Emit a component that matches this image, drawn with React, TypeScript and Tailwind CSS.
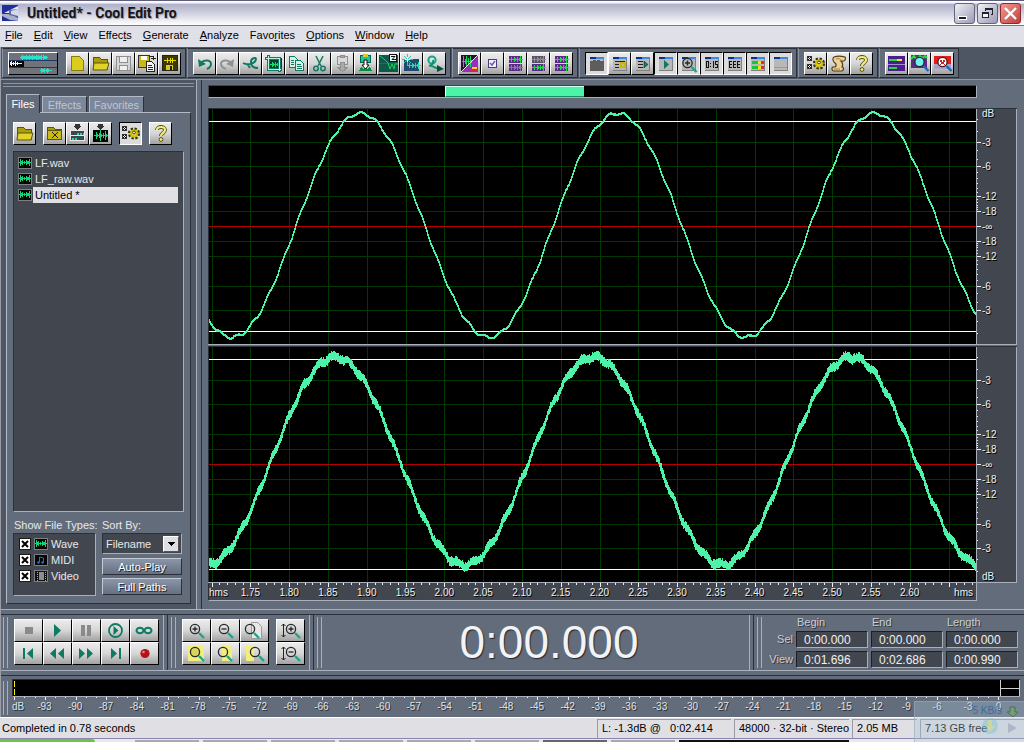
import type { ReactNode } from 'react'

const TEAL = '#0f7a62'

const menus = [
  ['', 'F', 'ile'],
  ['', 'E', 'dit'],
  ['', 'V', 'iew'],
  ['Effec', 't', 's'],
  ['', 'G', 'enerate'],
  ['', 'A', 'nalyze'],
  ['Favo', 'r', 'ites'],
  ['', 'O', 'ptions'],
  ['', 'W', 'indow'],
  ['', 'H', 'elp'],
]

/* ---------- icons ---------- */

function Ico({ children }: { children: ReactNode }) {
  return (
    <svg viewBox="0 0 21 21" className="w-[21px] h-[21px] shrink-0" fill="none" shapeRendering="crispEdges">
      {children}
    </svg>
  )
}

// small waveform made of vertical bars around a centre line
function Bars({ x, y, h, c }: { x: number; y: number; h: number[]; c: string }) {
  const d = h.map((v, i) => `M${x + i + 0.5} ${y - v}v${v * 2 + 1}`).join('')
  return <path d={d} stroke={c} />
}

const W14 = [0, 0, 3, 1, 0, 2, 5, 1, 0, 2, 0, 4, 1, 0]
const FLAT = [0, 0, 2, 0, 0, 2, 1, 0, 2, 0, 1, 3, 0, 0]

const Lens = ({ x, y, c = '#1ba58a', fill = 'none', sign = '' }: { x: number; y: number; c?: string; fill?: string; sign?: string }) => (
  <g shapeRendering="auto">
    <path d={`M${x + 4} ${y + 4}l5 5`} stroke={c} strokeWidth="2.4" />
    <circle cx={x} cy={y} r="4.6" stroke="#26282c" strokeWidth="1.3" fill={fill} />
    {sign && <path d={`M${x - 2.5} ${y}h5${sign === '+' ? `M${x} ${y - 2.5}v5` : ''}`} stroke="#26282c" strokeWidth="1.3" />}
  </g>
)

const Gear = ({ x, y }: { x: number; y: number }) => (
  <g shapeRendering="auto">
    <circle cx={x} cy={y} r="4.6" stroke="#3a3600" strokeWidth="3" strokeDasharray="2.2 1.4" />
    <circle cx={x} cy={y} r="3" fill="#f3e64a" stroke="#d2c100" strokeWidth="2" />
    <circle cx={x} cy={y - 1} r="1.4" fill="#fff" stroke="#3a3600" />
  </g>
)

const Folder = ({ mark }: { mark?: boolean }) => (
  <g>
    <path d="M3.500 16.500v-12h6l2 2h6v10z" fill="#a79c12" stroke="#5d5600" />
    {mark ? (
      <>
        <path d="M3.500 7.500h14v9h-14z" fill="#c9bb16" stroke="#5d5600" />
        <path d="M8 9l6 6M14 9l-6 6" stroke="#222" />
      </>
    ) : (
      <path d="M3 17l1-7h15l-2 7z" fill="#e2d32a" stroke="#5d5600" shapeRendering="auto" />
    )}
  </g>
)

const Pane = ({ children }: { children?: ReactNode }) => (
  <g>
    <path d="M4 4h14v14H4z" fill="#b8b8b8" />
    <path d="M4 17h14v1H4zM17 6h1v12h-1z" fill="#808080" />
    <path d="M4 4h14v2H4z" fill="#3b86e6" />
    <path d="M4 4h6v2H4z" fill="#0b2d90" />
    {children}
  </g>
)

const icons: Record<string, ReactNode> = {
  newFile: <path d="M4.500 3.500h8l4 4v10h-12z" fill="#dccb20" stroke="#8a7d00" />,
  open: <Folder />,
  close: <Folder mark />,
  saveOff: (
    <g stroke="#8d8f91">
      <path d="M3.500 3.500h14v14h-14z" fill="#d5d5d5" />
      <path d="M6.500 3.500h8v6h-8zM6.500 12.500h8v5h-8z" fill="#efefef" />
    </g>
  ),
  saveAs: (
    <g>
      <path d="M2.500 2.500h11v12h-11z" fill="#c9b81a" stroke="#333" />
      <path d="M5 3h6v4H5z" fill="#fff" />
      <path d="M10.500 8.500h5l3 3v7h-8z" fill="#f5f5f5" stroke="#222" />
      <path d="M12 12.500h4M12 14.500h5M12 16.500h5M14 3.500h3.500v3M15 5.500h5" stroke="#222" />
    </g>
  ),
  saveAll: (
    <g>
      <path d="M3.500 2.500h15v15h-15z" fill="#3c3a00" stroke="#222" />
      <Bars x={5} y={7} h={[0, 0, 0, 2, 0, 0, 2, 0, 2, 0, 0, 0]} c="#e6d800" />
      <path d="M7 12h7v5H7z" fill="#d8c81c" />
      <path d="M11 13h2v4h-2z" fill="#222" />
    </g>
  ),
  undo: (
    <g shapeRendering="auto">
      <path d="M7 10c3-4 10-3 10 1 0 3-2 4-4 5" stroke={TEAL} strokeWidth="2" />
      <path d="M4 6l1 8 7-3z" fill={TEAL} />
    </g>
  ),
  redo: (
    <g shapeRendering="auto">
      <path d="M14 10c-3-4-10-3-10 1 0 3 2 4 5 5" stroke="#8f9294" strokeWidth="2" />
      <path d="M17 6l-1 8-7-3z" fill="#8f9294" />
    </g>
  ),
  repeat: (
    <g shapeRendering="auto">
      <path d="M3 10c5 3 13 0 13-4 0-2-5-1-5 3 0 4 3 6 7 6M8 12l2 3" stroke={TEAL} strokeWidth="2" />
    </g>
  ),
  trim: (
    <g>
      <path d="M4 5h15v11H4z" fill="#0a3a34" />
      <Bars x={4} y={11} h={FLAT} c="#12e05e" />
      <path d="M2 5.500h14.500V19M5.500 2v14.500H19" stroke={TEAL} strokeWidth="3" />
      <path d="M3 5.500h13.500V18M5.500 3v13.500H18" stroke="#bff0e0" />
    </g>
  ),
  copy: (
    <g stroke={TEAL} fill="#d7efe8">
      <path d="M3.500 3.500h5l3 3v8h-8z" />
      <path d="M9.500 7.500h5l3 3v7h-8z" />
      <path d="M5 7.500h3M5 9.500h3M5 11.500h3M11 11.500h4M11 13.500h5M11 15.500h5" />
    </g>
  ),
  cut: (
    <g shapeRendering="auto" stroke={TEAL} strokeWidth="1.500">
      <path d="M7 3l5 10M14 3L9 13" />
      <circle cx="7" cy="15.500" r="2.200" />
      <circle cx="14" cy="15.500" r="2.200" />
    </g>
  ),
  pasteOff: (
    <g stroke="#8d8f91" fill="#d9d9d9">
      <path d="M5.500 3.500h10v8h-10z" />
      <path d="M8.500 2.500h4v2h-4z" fill="#aaa" />
      <path d="M8.500 9.500h4v5h3l-5 4-5-4h3z" fill="#aaa" />
    </g>
  ),
  mixPaste: (
    <g>
      <path d="M5.500 2.500h10v7h-10z" fill="#18c4a0" stroke="#0b5f4c" />
      <path d="M8 1h5v3H8z" fill="#e2c81e" />
      <path d="M4 18l2-4 3 2 1-2 2 2 3-2 2 4z" fill="#0c8a3c" />
      <path d="M9 7h3v5h2l-3.500 4L7 12h2z" fill="#fff" stroke="#111" shapeRendering="auto" />
    </g>
  ),
  zero: (
    <g>
      <path d="M1 2h19v17H1z" fill="#0d5a4a" />
      <path d="M1 10.500h19" stroke="#d02020" />
      <path d="M2 3l4 3 4 4 2 6 2-5 2 5 1-5h3" stroke="#17d15c" shapeRendering="auto" />
      <path d="M11.500 1.500h7v7h-7z" fill="#e7fff8" stroke="#111" />
      <path d="M13 3.500h4l-3 3h4" stroke="#111" shapeRendering="auto" />
    </g>
  ),
  spark: (
    <g>
      <path d="M3 6h15v12H3z" fill="#1d4a6e" />
      <Bars x={6} y={12} h={FLAT} c="#1de0a0" />
      <path d="M6.500 1v11M1 6.500h11M3 3l7 7M10 3l-7 7" stroke="#30c7a8" />
      <path d="M6.500 4v5M4 6.500h5" stroke="#fff" />
    </g>
  ),
  convert: (
    <g shapeRendering="auto">
      <circle cx="8" cy="7" r="3.600" stroke="#12a888" strokeWidth="2" />
      <path d="M9 7c1 3-1 5-4 6 3-1 6 2 10 3" stroke="#0e8f73" strokeWidth="2" />
      <path d="M13 12l7 4-7 3z" fill="#0b4f40" />
    </g>
  ),
  spectral: (
    <g>
      <path d="M2 2h17v17H2z" fill="#2d0b3a" />
      <path d="M2 19L19 2v17z" fill="#9a2cc0" shapeRendering="auto" />
      <Bars x={3} y={8} h={[0, 5, 0, 2, 5, 0, 3, 0, 5, 1]} c="#19d45d" />
      <path d="M2 19L19 2" stroke="#e8e8e8" shapeRendering="auto" />
      <path d="M13 15h5" stroke="#ffd21e" strokeWidth="2" />
      <path d="M11 18h7" stroke="#e01e5a" strokeWidth="2" />
    </g>
  ),
  check: (
    <g>
      <path d="M6.500 6.500h8v8h-8z" fill="#f2f2fa" stroke="#4b3b78" />
      <path d="M8 10l2 2 3-4" stroke="#7c54b8" strokeWidth="1.500" shapeRendering="auto" />
    </g>
  ),
  bothCh: (
    <g>
      <path d="M4 3h13v7H4zM4 11h13v7H4z" fill="#5b2a86" />
      <Bars x={4} y={6} h={FLAT} c="#17e03f" />
      <Bars x={4} y={14} h={FLAT} c="#8a7a99" />
    </g>
  ),
  rightCh: (
    <g>
      <path d="M4 3h13v7H4z" fill="#5b5068" />
      <Bars x={4} y={6} h={FLAT} c="#8f8f8f" />
      <path d="M4 11h13v7H4z" fill="#5b2a86" />
      <Bars x={4} y={14} h={FLAT} c="#17e03f" />
    </g>
  ),
  stereoCh: (
    <g>
      <path d="M4 3h13v7H4zM4 11h13v7H4z" fill="#5b2a86" />
      <Bars x={4} y={6} h={FLAT} c="#17e03f" />
      <Bars x={4} y={14} h={FLAT} c="#17e03f" />
    </g>
  ),
  winTabs: (
    <Pane>
      <path d="M4 8h3v-1h3v1h1V7h3v1h4v10H4z" fill="#5d5d5d" />
    </Pane>
  ),
  winCue: (
    <Pane>
      <path d="M6 8.500h10M6 11.500h4M6 14.500h4" stroke="#222" />
      <path d="M12 10h4v4h-4zM14 14h3" stroke="#c8ba00" strokeWidth="2" />
    </Pane>
  ),
  winList: (
    <Pane>
      <path d="M6 8.500h5M6 11.500h5M6 14.500h5" stroke="#222" />
      <path d="M12 8l4 3.500-4 3.500z" fill={TEAL} stroke="#222" strokeWidth=".5" shapeRendering="auto" />
    </Pane>
  ),
  winPlay: (
    <Pane>
      <path d="M9 7l5 4.500L9 16z" fill={TEAL} shapeRendering="auto" />
    </Pane>
  ),
  winZoom: (
    <Pane>
      <Lens x={9.5} y={10} sign="+" />
    </Pane>
  ),
  winTime: (
    <Pane>
      <path
        d="M5.500 8.500h2v6h-2zM9.500 10v1M9.500 13v1M12.500 8v7M17 8.500h-2.500v3h2v3h-2.500"
        stroke="#111"
      />
    </Pane>
  ),
  winSel: (
    <Pane>
      <path d="M5 8.500h12M5 11.500h12M5 14.500h12" stroke="#111" strokeDasharray="3 1" />
      <path d="M5.500 8v7M9.500 8v7M13.500 8v7" stroke="#111" />
    </Pane>
  ),
  winMeter: (
    <Pane>
      <path d="M5 8h6v3H5zM5 13h6v3H5z" fill="#17c53a" />
      <path d="M11 8h3v3h-3zM11 13h3v3h-3z" fill="#f2e21a" />
      <path d="M14 8h3v3h-3zM14 13h3v3h-3z" fill="#e0301e" />
    </Pane>
  ),
  winBlank: (
    <Pane>
      <path d="M4 14.500h13" stroke="#9a9a9a" />
    </Pane>
  ),
  settings: (
    <g>
      <path d="M2.500 3.500h4v4h-4zM2.500 11.500h4v4h-4z" fill="#eee" stroke="#333" />
      <path d="M3 4l3 3M6 4l-3 3M3 12l3 3M6 12l-3 3" stroke="#111" />
      <Gear x={14} y={10.5} />
    </g>
  ),
  script: (
    <g shapeRendering="auto">
      <path d="M6 4c3-1 7-1 11 0 1 1 0 4-1 4h-3c2 2 2 4 1 6 2 0 2 3 0 4H6c-2 0-3-3-1-4h2c2-1 1-3 0-4-2-1-3-5-1-6z" fill="#ecd29a" stroke="#4f3a14" strokeWidth="1.200" />
      <path d="M8 6c3-1 5 0 5 2M6 16h6" stroke="#a5803a" />
    </g>
  ),
  help: (
    <g shapeRendering="auto">
      <path d="M7 7c0-4 8-4 8 0 0 3-4 3-4 6" stroke="#4e4c10" strokeWidth="3.800" />
      <circle cx="11" cy="16.500" r="1.900" fill="#f4ee7a" stroke="#4e4c10" />
      <path d="M7 7c0-4 8-4 8 0 0 3-4 3-4 6" stroke="#f4ee7a" strokeWidth="2.200" />
    </g>
  ),
  levels: (
    <g>
      <path d="M2 3h17v15H2z" fill="#4a1f8a" />
      <path d="M3 7h11" stroke="#19e03c" strokeWidth="2" />
      <path d="M11 7h5" stroke="#f4e51d" strokeWidth="2" />
      <path d="M3 15h8" stroke="#19e03c" strokeWidth="2" />
      <path d="M2 11h17" stroke="#a78bd0" />
    </g>
  ),
  freq: (
    <g>
      <path d="M2 2h16v13H2z" fill="#5b2a86" />
      <path d="M2 6l3-3 3 4 3-4 3 2 2-2 2 2" stroke="#19e03c" strokeWidth="2" shapeRendering="auto" />
      <Lens x={10.5} y={9} c="#1e64c8" fill="#6ff3f0" />
    </g>
  ),
  phase: (
    <g>
      <path d="M2 3h17v8H2z" fill="#e01e1e" />
      <path d="M2 11h17v5H2z" fill="#a9a2c4" />
      <Lens x={10.5} y={9} c="#1e64c8" fill="#ffffff" />
      <path d="M8 7h2v2H8zM11 7h2v2h-2zM9 9h3v2H9zM8 11h1v1H8zM12 11h1v1h-1z" fill="#e02020" />
    </g>
  ),
  insertMulti: (
    <g>
      <path d="M8 1h5v2h2l-4.500 4L6 3h2z" fill="#333" />
      <path d="M3.500 7.500h14v5h-14zM3.500 12.500h14v5h-14z" fill="#3f464f" stroke="#e8e8e8" />
      <path d="M10 10.500h7M5 15.500h6" stroke="#22dca0" strokeWidth="2" strokeDasharray="2 1" />
    </g>
  ),
  insertWave: (
    <g>
      <path d="M8 1h5v2h2l-4.500 4L6 3h2z" fill="#333" />
      <path d="M3 7h15v12H3z" fill="#050505" />
      <Bars x={4} y={12} h={W14} c="#14d47c" />
    </g>
  ),
}

/* ---------- buttons ---------- */

function ToolButton({ icon, label, down }: { icon: string; label: string; down?: boolean }) {
  return (
    <button
      type="button"
      aria-label={label}
      aria-pressed={down}
      className={
        down
          ? 'flex size-[23px] items-center justify-center border border-t-black border-l-black border-r-white border-b-white bg-[#dcdcdc]'
          : 'flex size-[23px] items-center justify-center border border-t-white border-l-white border-r-black border-b-black bg-linear-to-b from-[#ececec] via-[#d6d6d6] to-[#a2a2a2]'
      }
    >
      <Ico>{icons[icon]}</Ico>
    </button>
  )
}

function ToolGroup({ children }: { children: ReactNode }) {
  return (
    <div className="flex h-[30px] items-center border border-t-[#2b2f38] border-l-[#8c95a3] border-r-[#2b2f38] border-b-[#2b2f38] bg-[#636c7a] pr-1 pl-[5px]">
      {children}
    </div>
  )
}

const groups: [string, string, boolean?][][] = [
  [
    ['undo', 'Undo'], ['redo', 'Redo'], ['repeat', 'Repeat last command'], ['trim', 'Trim'], ['copy', 'Copy'],
    ['cut', 'Cut'], ['pasteOff', 'Paste'], ['mixPaste', 'Mix paste'], ['zero', 'Zero crossings'],
    ['spark', 'Noise reduction'], ['convert', 'Convert sample type'],
  ],
  [['spectral', 'Spectral view'], ['check', 'Snap'], ['bothCh', 'Left channel'], ['rightCh', 'Right channel'], ['stereoCh', 'Both channels']],
  [
    ['winTabs', 'Organizer', true], ['winCue', 'Cue list'], ['winList', 'Play list'], ['winPlay', 'Transport', true],
    ['winZoom', 'Zoom', true], ['winTime', 'Time', true], ['winSel', 'Selection', true], ['winMeter', 'Levels', true],
    ['winBlank', 'Status bar', true],
  ],
  [['settings', 'Settings'], ['script', 'Scripts'], ['help', 'Help']],
  [['levels', 'Monitor levels'], ['freq', 'Frequency analysis'], ['phase', 'Phase analysis']],
]

function Toolbar() {
  return (
    <div className="flex gap-px border-b border-[#8c95a3] bg-[#4f5663] py-px pl-px">
      <ToolGroup>
        <button
          type="button"
          aria-label="Switch to multitrack view"
          className="mr-2 h-[23px] w-[50px] border border-t-white border-l-white border-r-black border-b-black bg-[#59616b]"
        >
          <svg viewBox="0 0 48 21" className="block h-[21px] w-[48px]" shapeRendering="crispEdges">
            <path d="M0 0h48v21H0z" fill="#70747a" />
            <path d="M0 7h48v1H0zM0 14h48v1H0z" fill="#1c3a67" />
            <path d="M0 8h15v6H0z" fill="#050505" />
            <path d="M12 4.500h26" stroke="#2be0c8" strokeWidth="3" strokeDasharray="6 1 3 1" />
            <Bars x={11} y={4} h={[0, 1, 2, 0, 0, 1, 2, 1, 0, 2, 0, 1, 2, 0, 1, 0, 2, 0, 2, 1, 0, 2, 0, 2, 1, 0, 1, 0]} c="#2be0c8" />
            <Bars x={1} y={10} h={[1, 2, 0, 1, 0, 2, 0, 1, 0, 0, 0, 0]} c="#f2f2f2" />
            <Bars x={31} y={17} h={[0, 2, 1, 1, 2, 0, 1, 2, 1, 0, 0, 0]} c="#2be0c8" />
          </svg>
        </button>
        <ToolButton icon="newFile" label="New" />
        <ToolButton icon="open" label="Open" />
        <ToolButton icon="saveOff" label="Save" />
        <ToolButton icon="saveAs" label="Save as" />
        <ToolButton icon="saveAll" label="Save all" />
      </ToolGroup>
      {groups.map((group, i) => (
        <ToolGroup key={i}>
          {group.map(([icon, label, down]) => (
            <ToolButton key={icon} icon={icon} label={label} down={down} />
          ))}
        </ToolGroup>
      ))}
    </div>
  )
}

/* ---------- title and menu ---------- */

function TitleBar() {
  return (
    <header className="flex h-[26px] items-center border-t border-b border-t-[#5c5c7c] border-b-[#77778f] bg-linear-to-b from-[#ffffff] from-5% via-[#b0b0c9] via-15% to-[#ffffff] pr-[3px] pl-[2px]">
      <svg viewBox="0 0 16 16" className="size-4">
        <path d="M0 0h16v16H0z" fill="#1f2f9c" />
        <path d="M16 1L2 8h8l6-3z" fill="#e8e8f4" />
        <path d="M0 9h9l7 4v3L8 15 0 11z" fill="#a9afc8" />
        <path d="M7 5l9-1v8l-9-2z" fill="#5d6aa8" />
        <path d="M9 6l7-2v7l-7-2z" fill="#d5d8ea" />
      </svg>
      <h1 className="ml-[9px] flex-1 font-['Roboto',sans-serif] text-[14px] leading-5 font-bold text-[#151515] [text-shadow:1px_1px_1px_#9a9ab0]">
        Untitled* - Cool Edit Pro
      </h1>
      <div className="flex gap-[2px]">
        <button type="button" aria-label="Minimize" className="size-[21px] rounded-[3px] border border-[#63637e] bg-linear-to-br from-[#f2f2f8] to-[#9a9ab4]">
          <svg viewBox="0 0 19 19" className="block size-[19px]" shapeRendering="crispEdges">
            <path d="M3 12h9v4H3z" fill="#fff" />
            <path d="M4 13h7v2H4z" fill="#1d1d2c" />
          </svg>
        </button>
        <button type="button" aria-label="Restore" className="size-[21px] rounded-[3px] border border-[#63637e] bg-linear-to-br from-[#f2f2f8] to-[#9a9ab4]">
          <svg viewBox="0 0 19 19" className="block size-[19px]" shapeRendering="crispEdges" fill="none" stroke="#23232f">
            <path d="M7.500 7V4.500h7v6h-2M7 5.500h8" />
            <path d="M4.500 8.500h6v5h-6zM4 9.500h7" fill="#f4f4fa" />
          </svg>
        </button>
        <button type="button" aria-label="Close" className="size-[21px] rounded-[3px] border border-[#8a2b2b] bg-linear-to-br from-[#f29a94] to-[#c03c3c]">
          <svg viewBox="0 0 19 19" className="block size-[19px]">
            <path d="M4 4l11 11M15 4L4 15" stroke="#fff" strokeWidth="2.400" />
          </svg>
        </button>
      </div>
    </header>
  )
}

function MenuBar() {
  return (
    <nav className="flex h-[21px] items-center gap-[11px] bg-[#e0e0e9] pb-[3px] pl-[5px] text-[11px] leading-4 text-black">
      {menus.map(([pre, key, post]) => (
        <button type="button" key={pre + key + post}>
          {pre}
          <span className="underline">{key}</span>
          {post}
        </button>
      ))}
    </nav>
  )
}

/* ---------- organizer ---------- */

const files = ['LF.wav', 'LF_raw.wav', 'Untitled *']

function WaveBadge() {
  return (
    <svg viewBox="0 0 14 12" className="h-3 w-[14px] shrink-0" shapeRendering="crispEdges">
      <path d="M.5.500h13v11H.5z" fill="#040404" stroke="#7d8086" />
      <Bars x={1} y={5} h={[0, 3, 1, 2, 0, 1, 0, 2, 1, 1, 3, 0]} c="#12d474" />
    </svg>
  )
}

const types = [
  { name: 'Wave', badge: <WaveBadge /> },
  {
    name: 'MIDI',
    badge: (
      <svg viewBox="0 0 14 12" className="h-3 w-[14px]">
        <path d="M.5.500h13v11H.5z" fill="#040404" stroke="#7d8086" />
        <path d="M5.500 8V3l4 1v4" stroke="#1a6fd8" fill="none" />
        <circle cx="4.500" cy="8.500" r="1.300" fill="#1a6fd8" />
        <circle cx="8.500" cy="8.500" r="1.300" fill="#1a6fd8" />
      </svg>
    ),
  },
  {
    name: 'Video',
    badge: (
      <svg viewBox="0 0 14 12" className="h-3 w-[14px]" shapeRendering="crispEdges">
        <path d="M.5.500h13v11H.5z" fill="#111" stroke="#7d8086" />
        <path d="M5 2h5v8H5z" fill="#8d8d8d" />
        <path d="M3.500 2v9M11.500 2v9" stroke="#aaa" strokeDasharray="1 1" />
      </svg>
    ),
  },
]

const smallButton =
  'h-[17px] border border-t-[#c3cad6] border-l-[#c3cad6] border-r-[#2b2f38] border-b-[#2b2f38] bg-linear-to-b from-[#8b96a9] to-[#667081] text-[11px] leading-[14px] text-white [text-shadow:1px_1px_0_#222]'

function Organizer() {
  return (
    <aside className="flex w-[195px] shrink-0 flex-col bg-[#4f5663] px-[5px] pt-[3px] pb-[5px] text-[11px] leading-4 text-[#e6e8ec]">
      <div className="-mx-[3px] h-1 border-t border-b border-[#8c95a3]" />
      <div className="mt-[7px] flex items-end gap-[2px]">
        <button type="button" className="z-10 -mb-px h-[19px] w-[34px] border border-b-0 border-t-[#b4bac5] border-l-[#b4bac5] border-r-[#2b2f38] bg-[#636c7a] text-white">
          Files
        </button>
        <button type="button" className="h-[16px] w-[45px] border border-b-0 border-t-[#b4bac5] border-l-[#b4bac5] border-r-[#2b2f38] bg-[#7b879b] leading-[14px] text-[#c0c5ce]">
          Effects
        </button>
        <button type="button" className="h-[16px] w-[55px] border border-b-0 border-t-[#b4bac5] border-l-[#b4bac5] border-r-[#2b2f38] bg-[#7b879b] leading-[14px] text-[#c0c5ce]">
          Favorites
        </button>
      </div>
      <div className="flex flex-1 flex-col border border-t-[#b4bac5] border-l-[#b4bac5] border-r-[#2b2f38] border-b-[#2b2f38] bg-[#636c7a] px-[6px] pt-[9px] pb-[7px]">
        <div className="flex">
          <ToolButton icon="open" label="Import file" />
          <div className="mx-[7px] flex">
            <ToolButton icon="close" label="Close file" />
            <ToolButton icon="insertMulti" label="Insert into multitrack" />
            <ToolButton icon="insertWave" label="Edit file" />
          </div>
          <ToolButton icon="settings" label="Show options" down />
          <div className="ml-[7px]">
            <ToolButton icon="help" label="Help" />
          </div>
        </div>
        <ul className="mt-[6px] flex-1 border border-t-[#2b2f38] border-l-[#2b2f38] border-r-[#a9b0bb] border-b-[#a9b0bb] bg-[#42474f] py-[3px] pr-[5px] pl-[4px]">
          {files.map((file, i) => (
            <li key={file}>
              <button type="button" className="flex h-4 w-full items-center gap-px text-left">
                <WaveBadge />
                <span className={i === 2 ? 'flex-1 bg-[#e0dfe4] pl-[2px] text-black' : 'flex-1 pl-[2px]'}>{file}</span>
              </button>
            </li>
          ))}
        </ul>
        <div className="mt-[5px] flex gap-[6px]">
          <fieldset className="w-[83px] min-w-0 shrink-0">
            <legend className="pl-px whitespace-nowrap">Show File Types:</legend>
            <div className="flex h-[63px] flex-col border border-t-[#2b2f38] border-l-[#2b2f38] border-r-[#a9b0bb] border-b-[#a9b0bb] bg-[#42474f] pt-[2px] pl-[5px]">
              {types.map((type) => (
                <label key={type.name} className="flex h-4 items-center gap-[3px]">
                  <span className="grid size-3">
                    <input type="checkbox" defaultChecked className="col-start-1 row-start-1 size-3 appearance-none border border-[#1a1a1a] bg-white" />
                    <svg viewBox="0 0 12 12" className="pointer-events-none z-10 col-start-1 row-start-1 size-3">
                      <path d="M3 3l6 6M9 3l-6 6" stroke="#000" strokeWidth="2" />
                    </svg>
                  </span>
                  {type.badge}
                  {type.name}
                </label>
              ))}
            </div>
          </fieldset>
          <div className="flex w-[80px] flex-col">
            <label htmlFor="sort">Sort By:</label>
            <div className="grid border border-t-[#2b2f38] border-l-[#2b2f38] border-r-[#a9b0bb] border-b-[#a9b0bb] bg-[#42474f]">
              <select id="sort" className="col-start-1 row-start-1 h-[19px] w-full appearance-none pl-[3px] text-[11px] leading-4">
                <option>Filename</option>
              </select>
              <span className="pointer-events-none col-start-1 row-start-1 mr-[2px] flex h-4 w-4 items-center justify-center self-center justify-self-end border border-t-white border-l-white border-r-[#555] border-b-[#555] bg-[#dedee4]">
                <svg viewBox="0 0 7 4" className="h-1 w-[7px]" shapeRendering="crispEdges">
                  <path d="M0 0h7L3.500 4z" />
                </svg>
              </span>
            </div>
            <button type="button" className={smallButton + ' mt-[4px]'}>Auto-Play</button>
            <button type="button" className={smallButton + ' mt-[3px]'}>Full Paths</button>
          </div>
        </div>
      </div>
    </aside>
  )
}

/* ---------- waveform ---------- */

const PLOT_W = 767
const PLOT_H = 235
const PX_PER_SEC = 775.8
const gridX = Array.from({ length: 20 }, (_, i) => Math.floor((0.004 + i * 0.05) * PX_PER_SEC) + 0.5)
const gridY = [33, 57, 87, 102, 132, 147, 177, 201]

const noise = (n: number) => {
  const s = Math.sin(n * 127.1 + 11.7) * 43758.5453
  return s - Math.floor(s)
}

const wave = (x: number, mid: number, amp: number, peak: number, period: number, hum: number, humPeak: number) =>
  mid - amp * Math.cos(((x - peak) / period) * Math.PI * 2) - hum * Math.cos(((x - humPeak) / 15.5) * Math.PI * 2)

function leftPath() {
  let d = ''
  for (let x = 0; x < PLOT_W; x++) {
    const a = Math.round(wave(x, 116, 112, 151.5, 257, 1.5, 152) + noise(x) * 0.6)
    const b = Math.round(wave(x + 1, 116, 112, 151.5, 257, 1.5, 152) + noise(x + 1) * 0.6)
    d += `M${x + 0.5} ${Math.min(a, b) - 1}V${Math.max(a, b) + 1}`
  }
  return d
}

function rightPath() {
  let d = ''
  for (let x = 0; x < PLOT_W; x++) {
    const y = wave(x, 114, 104, 126, 258, 2, 124)
    d += `M${x + 0.5} ${Math.round(y - 3 - noise(x) * 2.5)}V${Math.round(y + 3 + noise(x + 900) * 2.5)}`
  }
  return d
}

function Plot({ d, name }: { d: string; name: string }) {
  return (
    <svg
      viewBox={`0 0 ${PLOT_W} ${PLOT_H}`}
      preserveAspectRatio="none"
      className="block h-[235px] w-full bg-black"
      shapeRendering="crispEdges"
      fill="none"
      role="img"
      aria-label={name}
    >
      <path d={gridX.map((x) => `M${x} 0V${PLOT_H}`).join('')} stroke="#003800" />
      <path d={gridY.map((y) => `M0 ${y + 0.5}H${PLOT_W}`).join('')} stroke="#003800" />
      <path d={`M0 117.500H${PLOT_W}`} stroke="#b40000" />
      <path d={`M0 12.500H${PLOT_W}M0 222.500H${PLOT_W}`} stroke="#fff" />
      <path d={d} stroke="#4df3a8" />
    </svg>
  )
}

const dbMarks: [string, number][] = [
  ['-3', 33], ['-6', 57], ['-12', 87], ['-18', 102], ['-∞', 117], ['-18', 132], ['-12', 147], ['-6', 177], ['-3', 201],
]
const dbMinor = [1, 2, 4, 5, 7, 8, 9, 10, 11, 13, 14, 15, 16, 17].flatMap((db) => {
  const off = Math.round(120 * Math.pow(10, -db / 20))
  return [117 - off, 117 + off]
})

function DbScale({ unitY }: { unitY: number }) {
  return (
    <svg viewBox="0 0 39 235" className="block h-[235px] w-[39px] font-['Liberation_Sans',sans-serif] text-[10px]" fill="#f0f0f0">
      <g shapeRendering="crispEdges" stroke="#f0f0f0">
        <path d={dbMarks.map(([, y]) => `M0 ${y + 0.5}h4`).join('')} />
        <path d={dbMinor.map((y) => `M0 ${y + 0.5}h1`).join('')} />
      </g>
      <g className="[text-shadow:1px_1px_0_#000]">
        <text x="5" y={unitY}>dB</text>
        {dbMarks.map(([label, y]) => (
          <text key={y} x="5" y={y + 4}>{label}</text>
        ))}
      </g>
    </svg>
  )
}

function Channel({ d, name, unitY }: { d: string; name: string; unitY: number }) {
  return (
    <div className="flex border-t border-b border-t-[#2b2f38] border-b-[#a9b0bb]">
      <div className="min-w-0 flex-1 border-l border-[#2b2f38]">
        <Plot d={d} name={name} />
      </div>
      <div className="w-[41px] border-r border-l border-[#a9b0bb] bg-[#42474f]">
        <DbScale unitY={unitY} />
      </div>
    </div>
  )
}

const times = Array.from({ length: 18 }, (_, i) => (1.75 + i * 0.05).toFixed(2))

function TimeRuler() {
  const ticks = Array.from({ length: 100 }, (_, i) => {
    const x = Math.floor((0.004 + i * 0.01) * PX_PER_SEC) + 0.5
    return `M${x} 0v${i % 5 ? 2 : 4}`
  }).join('')
  return (
    <div className="mr-10 flex h-[18px] flex-col border-r border-b border-l border-l-[#2b2f38] border-r-[#a9b0bb] border-b-[#a9b0bb] bg-[#42474f] text-[#f0f0f0]">
      <svg viewBox={`0 0 ${PLOT_W} 4`} preserveAspectRatio="none" className="h-1 w-full" shapeRendering="crispEdges">
        <path d={ticks} stroke="#f0f0f0" />
      </svg>
      <div className="flex text-[10px] leading-[11px] [text-shadow:1px_1px_0_#000]">
        <span className="w-[22px]">hms</span>
        <div className="flex flex-1">
          {times.map((t) => (
            <span key={t} className="flex-1 text-center">{t}</span>
          ))}
        </div>
        <span className="w-[47px] pr-[3px] text-right">hms</span>
      </div>
    </div>
  )
}

function Editor() {
  return (
    <main className="flex min-w-0 flex-1 flex-col bg-[#636c7a] pt-[5px] pr-[7px] pb-2 pl-[6px]">
      <div className="mr-10 mb-[10px] flex h-[13px] border border-t-[#42474f] border-l-[#42474f] border-r-[#a9b0bb] border-b-[#a9b0bb] bg-black">
        <div className="ml-[30.8%] w-[18.1%] border-t border-b border-l border-t-[#c8ffe6] border-l-white border-b-[#1d8f5c] bg-[#4df3a8]" />
      </div>
      <div className="flex flex-col gap-px">
        <Channel d={leftPath()} name="Left channel" unitY={8} />
        <Channel d={rightPath()} name="Right channel" unitY={233} />
      </div>
      <TimeRuler />
    </main>
  )
}

/* ---------- transport, zoom, time, selection ---------- */

const wideIcons: Record<string, ReactNode> = {
  Stop: <path d="M10 7h8v7h-8z" fill="#8a8a8a" />,
  Play: <path d="M10 4l7 6.500-7 6.500z" fill={TEAL} />,
  Pause: <path d="M8 5h4v11H8zM14 5h4v11h-4z" fill="#8a8a8a" />,
  'Play to end': (
    <g>
      <circle cx="13.500" cy="10.500" r="6.500" stroke={TEAL} strokeWidth="1.800" />
      <path d="M11.500 6l5 4.500-5 4.500z" fill={TEAL} />
    </g>
  ),
  Loop: (
    <g stroke={TEAL} strokeWidth="2">
      <ellipse cx="9" cy="10.500" rx="3.500" ry="2.800" />
      <ellipse cx="17" cy="10.500" rx="3.500" ry="2.800" />
    </g>
  ),
  'Go to beginning': <path d="M8 5h2v11H8zM18 5v11l-6-5.500z" fill={TEAL} />,
  Rewind: <path d="M12 5v11l-6-5.500zM20 5v11l-6-5.500z" fill={TEAL} />,
  'Fast forward': <path d="M6 5v11l6-5.500zM14 5v11l6-5.500z" fill={TEAL} />,
  'Go to end': <path d="M9 5v11l6-5.500zM17 5h2v11h-2z" fill={TEAL} />,
  Record: (
    <g>
      <circle cx="14" cy="10.500" r="4.600" fill="#b31217" />
      <circle cx="12.500" cy="9" r="1.300" fill="#f08080" />
    </g>
  ),
  'Zoom in': <Lens x={12} y={9} sign="+" />,
  'Zoom out': <Lens x={12} y={9} sign="-" />,
  'Zoom full': (
    <g>
      <path d="M10.500 2.500h6l4 4v12h-10z" fill="#e8e8e8" stroke="#9a9a9a" />
      <Lens x={9} y={9} />
    </g>
  ),
  'Zoom to selection': (
    <g>
      <path d="M5 3h16v15H5z" fill="#f1ee7c" />
      <Lens x={12} y={9} fill="#d9d65c" />
    </g>
  ),
  'Zoom to left': (
    <g>
      <path d="M10 3h10v15H10z" fill="#f1ee7c" />
      <Lens x={11} y={9} />
    </g>
  ),
  'Zoom to right': (
    <g>
      <path d="M5 3h8v15H5z" fill="#f1ee7c" />
      <Lens x={14} y={9} />
    </g>
  ),
  'Zoom in vertically': (
    <g>
      <path d="M6.500 4v13M4.500 6l2-2 2 2M4.500 15l2 2 2-2" stroke="#222" />
      <Lens x={14} y={9} sign="+" />
    </g>
  ),
  'Zoom out vertically': (
    <g>
      <path d="M6.500 4v13M4.500 6l2-2 2 2M4.500 15l2 2 2-2" stroke="#222" />
      <Lens x={14} y={9} sign="-" />
    </g>
  ),
}

function WideButton({ name }: { name: string }) {
  return (
    <button
      type="button"
      aria-label={name}
      className="h-[23px] w-[29px] border border-t-white border-l-white border-r-black border-b-black bg-linear-to-b from-[#ececec] via-[#d6d6d6] to-[#a2a2a2]"
    >
      <svg viewBox="0 0 27 21" className="block h-[21px] w-[27px]" fill="none">
        {wideIcons[name]}
      </svg>
    </button>
  )
}

const Grip = () => <div className="my-[2px] w-[5px] shrink-0 border-r border-l border-[#a9b0bb]" />
const Sash = () => <div className="w-[5px] shrink-0 border-r border-l border-l-[#a9b0bb] border-r-[#2b2f38]" />
const Shelf = () => <div className="h-[6px] border-t border-b border-t-[#a9b0bb] border-b-[#2b2f38] bg-[#636c7a]" />

const transport = ['Stop', 'Play', 'Pause', 'Play to end', 'Loop', 'Go to beginning', 'Rewind', 'Fast forward', 'Go to end', 'Record']
const zooms = ['Zoom in', 'Zoom out', 'Zoom full', 'Zoom to selection', 'Zoom to left', 'Zoom to right']

const spans: [string, string[]][] = [
  ['Sel', ['0:00.000', '0:00.000', '0:00.000']],
  ['View', ['0:01.696', '0:02.686', '0:00.990']],
]
const columns = ['Begin', 'End', 'Length']

function ControlRow() {
  return (
    <section className="flex h-[55px] bg-[#636c7a] pr-[6px] pl-[2px]">
      <Grip />
      <div className="mr-1 ml-[6px] grid grid-cols-5 content-start pt-1">
        {transport.map((name) => <WideButton key={name} name={name} />)}
      </div>
      <Sash />
      <div className="ml-[3px] flex"><Grip /></div>
      <div className="ml-[6px] grid grid-cols-3 content-start pt-1">
        {zooms.map((name) => <WideButton key={name} name={name} />)}
      </div>
      <div className="mr-1 ml-[7px] grid content-start pt-1">
        <WideButton name="Zoom in vertically" />
        <WideButton name="Zoom out vertically" />
      </div>
      <Sash />
      <div className="ml-[3px] flex"><Grip /></div>
      <output className="flex-1 pt-[3px] pr-px pl-7 text-center text-[46px] leading-[48px] text-[#f2f3f5] [text-shadow:1px_1px_1px_#22262e]">0:00.000</output>
      <Sash />
      <div className="ml-[3px] flex"><Grip /></div>
      <div className="ml-[6px] grid grid-cols-[25px_72px_72px_72px] content-start gap-x-[3px] gap-y-[3px] text-[11px] text-[#c9cdd5] [text-shadow:1px_1px_0_#333842]">
        <span />
        {columns.map((name) => (
          <span key={name} className="h-[13px] pl-px leading-[14px]">{name}</span>
        ))}
        {spans.map(([row, values]) => [
          <span key={row} className="text-right leading-[17px]">{row}</span>,
          ...values.map((value, i) => (
            <input
              key={row + i}
              aria-label={row + ' ' + columns[i]}
              defaultValue={value}
              className="h-[17px] w-full border border-t-[#1c1f25] border-l-[#1c1f25] border-r-[#a9b0bb] border-b-[#a9b0bb] bg-[#42474f] pl-[7px] text-[12px] leading-[15px] text-[#f0f0f0]"
            />
          )),
        ])}
      </div>
    </section>
  )
}

/* ---------- level meter ---------- */

const levels = Array.from({ length: 32 }, (_, i) => String(-93 + i * 3))

function LevelMeter() {
  const ticks = Array.from({ length: 97 }, (_, i) => `M${Math.round(2 + i * 10.25) + 0.5} 0v${i % 3 ? 1 : 3}`).join('')
  return (
    <section className="flex bg-[#636c7a] pt-[3px] pl-[2px] text-[#e0e2e6]">
      <Grip />
      <div className="ml-1 min-w-0 flex-1 pr-1">
        <div className="flex h-[18px] justify-between border-t border-b border-l border-t-[#2b2f38] border-l-[#2b2f38] border-b-[#a9b0bb] bg-black">
          <div className="my-px ml-px flex flex-col gap-[2px]">
            <span className="w-px flex-1 bg-[#fff200]" />
            <span className="w-px flex-1 bg-[#fff200]" />
          </div>
          <div className="flex w-5 flex-col border-r border-l border-[#c9cdd5]">
            <span className="flex-1 border-b border-[#c9cdd5]" />
            <span className="flex-1" />
          </div>
        </div>
        <svg viewBox="0 0 1008 3" preserveAspectRatio="none" className="block h-[3px] w-full" shapeRendering="crispEdges">
          <path d={ticks} stroke="#f0f0f0" />
        </svg>
        <div className="flex h-[17px] pr-[6px] text-[10px] leading-[14px] [text-shadow:1px_1px_0_#2b2f38]">
          <span className="w-[17px]">dB</span>
          {levels.map((level) => (
            <span key={level} className="flex-1 text-center">{level}</span>
          ))}
        </div>
      </div>
    </section>
  )
}

/* ---------- status bar ---------- */

const field = 'h-[19px] border-t border-l border-[#9a9aa4] pl-1 leading-[17px] whitespace-pre'

function StatusBar() {
  return (
    <footer className="flex h-[21px] items-end gap-[3px] border-t border-white bg-[#e0dfe4] text-[11px] text-black">
      <span className="flex-1 pl-[2px] leading-[19px]">Completed in 0.78 seconds</span>
      <span className={field + ' w-[134px]'}>L: -1.3dB @   0:02.414</span>
      <span className={field + ' w-[115px]'}>48000 · 32-bit · Stereo</span>
      <span className={field + ' w-[65px]'}>2.05 MB</span>
      <span className={field + ' w-[104px]'}>7.13 GB free</span>
    </footer>
  )
}

// translucent download monitor that floats over the corner of the window
function NetMonitor() {
  return (
    <div className="pointer-events-none absolute right-0 bottom-0 flex h-[41px] w-[110px] items-start justify-end gap-1 border-t border-l border-[#9aa9b8]/60 bg-[#a8c4d8]/35 pt-[2px] pr-[6px]">
      <div className="flex flex-col items-end">
        <span className="text-[10px] leading-[14px] text-[#2b62a0]/80">5 KB/s</span>
        <svg viewBox="0 0 16 16" className="mr-1 size-4 opacity-40">
          <circle cx="8" cy="8" r="8" fill="#6fc3d8" />
          <path d="M6 2h4v6h3l-5 6-5-6h3z" fill="#c9d84a" />
        </svg>
      </div>
      <svg viewBox="0 0 12 32" className="h-8 w-3 opacity-60">
        <path d="M4 3h5v5h3l-5 5-6-5h3z" fill="#6fae5c" stroke="#35543a" />
        <path d="M2 19l9 5-9 5z" fill="#9aa4b8" />
      </svg>
    </div>
  )
}

export default function App() {
  return (
    <div className="relative min-h-screen w-full overflow-hidden bg-white font-['Liberation_Sans',Arial,sans-serif]">
      <TitleBar />
      <MenuBar />
      <div className="border-l border-[#9c9ca6] bg-[#4f5663]">
        <Toolbar />
        <div className="flex">
          <Organizer />
          <div className="w-[6px] shrink-0 border-r border-l border-l-[#a9b0bb] border-r-[#2b2f38] bg-[#636c7a]" />
          <Editor />
        </div>
        <Shelf />
        <ControlRow />
        <Shelf />
        <LevelMeter />
      </div>
      <StatusBar />
      <div className="flex h-1 border-t border-[#8a86b0] bg-[#e8e8ee]">
        <div className="w-[95px] rounded-tr bg-[#6cc24a]" />
        <div className="ml-10 flex flex-1 gap-1 pt-px">
          <span className="w-16 bg-[#a9a9b4]" />
          <span className="w-16 bg-[#a9a9b4]" />
          <span className="w-16 bg-[#a9a9b4]" />
          <span className="w-16 bg-[#a9a9b4]" />
          <span className="w-16 bg-[#a9a9b4]" />
          <span className="w-16 bg-[#a9a9b4]" />
          <span className="w-16 bg-[#666670]" />
          <span className="w-16 bg-[#a9a9b4]" />
          <span className="w-[170px] bg-[#111]" />
        </div>
      </div>
      <NetMonitor />
    </div>
  )
}
